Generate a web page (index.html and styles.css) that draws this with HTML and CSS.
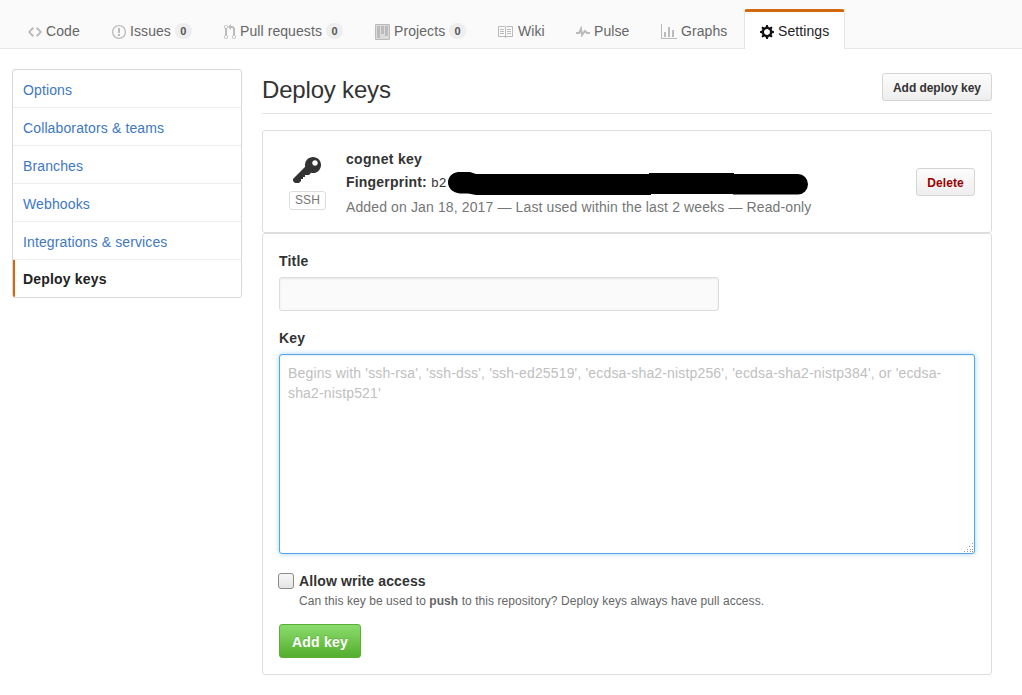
FILE: index.html
```html
<!DOCTYPE html>
<html lang="en">
<head>
<meta charset="utf-8">
<title>Deploy keys</title>
<link rel="stylesheet" href="styles.css">
</head>
<body>
<nav class="reponav">
  <a class="tab tab-code"><svg class="icon" width="14" height="16" viewBox="0 0 14 16"><path d="M9.5 3L8 4.5 11.5 8 8 11.5 9.5 13 14 8 9.5 3zm-5 0L0 8l4.5 5L6 11.5 2.5 8 6 4.5 4.5 3z"/></svg><span>Code</span></a>
  <a class="tab tab-issues"><svg class="icon" width="14" height="16" viewBox="0 0 14 16"><path fill-rule="evenodd" d="M7 2.3c3.14 0 5.7 2.56 5.7 5.7s-2.56 5.7-5.7 5.7A5.71 5.71 0 0 1 1.3 8c0-3.14 2.56-5.7 5.7-5.7zM7 1C3.14 1 0 4.14 0 8s3.14 7 7 7 7-3.14 7-7-3.14-7-7-7zm1 3H6v5h2V4zm0 6H6v2h2v-2z"/></svg><span>Issues</span><span class="counter">0</span></a>
  <a class="tab tab-pulls"><svg class="icon" width="12" height="16" viewBox="0 0 12 16"><path fill-rule="evenodd" d="M11 11.28V5c-.03-.78-.34-1.47-.94-2.06C9.46 2.35 8.78 2.03 8 2H7V0L4 3l3 3V4h1c.27.02.48.11.69.31.21.2.3.42.31.69v6.28A1.993 1.993 0 0 0 10 15a1.993 1.993 0 0 0 1-3.72zm-1 2.92c-.66 0-1.2-.55-1.2-1.2 0-.65.55-1.2 1.2-1.2.65 0 1.2.55 1.2 1.2 0 .65-.55 1.2-1.2 1.2zM4 3c0-1.11-.89-2-2-2a1.993 1.993 0 0 0-1 3.72v6.56A1.993 1.993 0 0 0 2 15a1.993 1.993 0 0 0 1-3.72V4.72c.59-.34 1-.98 1-1.72zm-.8 10c0 .66-.55 1.2-1.2 1.2-.65 0-1.2-.55-1.2-1.2 0-.65.55-1.2 1.2-1.2.65 0 1.2.55 1.2 1.2zM2 4.2C1.34 4.2.8 3.65.8 3c0-.65.55-1.2 1.2-1.2.65 0 1.2.55 1.2 1.2 0 .65-.55 1.2-1.2 1.2z"/></svg><span>Pull requests</span><span class="counter">0</span></a>
  <a class="tab tab-projects"><svg class="icon" width="15" height="16" viewBox="0 0 15 16"><path fill-opacity=".5" d="M1 1h13v14H1z"/><path fill-rule="evenodd" d="M10 12h3V2h-3v10zM6 10h3V2H6v8zM2 14h3V2H2v12zM14 0H1a1 1 0 0 0-1 1v14a1 1 0 0 0 1 1h13a1 1 0 0 0 1-1V1a1 1 0 0 0-1-1zm0 15H1V1h13z"/></svg><span>Projects</span><span class="counter">0</span></a>
  <a class="tab tab-wiki"><svg class="icon" width="16" height="16" viewBox="0 0 16 16"><path fill-rule="evenodd" d="M3 5h4v1H3V5zm0 3h4V7H3v1zm0 2h4V9H3v1zm11-5h-4v1h4V5zm0 2h-4v1h4V7zm0 2h-4v1h4V9zm2-6v9c0 .55-.45 1-1 1H9.5l-1 1-1-1H2c-.55 0-1-.45-1-1V3c0-.55.45-1 1-1h5.5l1 1 1-1H15c.55 0 1 .45 1 1zm-8 .5L7.5 3H2v9h6V3.5zm7-.5H9.5l-.5.5V12h6V3z"/></svg><span>Wiki</span></a>
  <a class="tab tab-pulse"><svg class="icon" width="14" height="16" viewBox="0 0 14 16"><path d="M11.5 8L8.8 5.4 6.6 8.5 5.5 1.6 2.38 8H0v2h3.6l.9-1.8.9 5.4L9 8.5l1.6 1.5H14V8h-2.5z"/></svg><span>Pulse</span></a>
  <a class="tab tab-graphs"><svg class="icon" width="16" height="16" viewBox="0 0 16 16"><path d="M16 14v1H0V0h1v14h15zM5 13H3V8h2v5zm4 0H7V3h2v10zm4 0h-2V6h2v7z"/></svg><span>Graphs</span></a>
  <a class="tab tab-settings selected"><svg class="icon" width="14" height="16" viewBox="0 0 14 16"><path fill-rule="evenodd" d="M14 8.77v-1.6l-1.94-.64-.45-1.09.88-1.84-1.13-1.13-1.81.91-1.09-.45-.69-1.92h-1.6l-.63 1.94-1.11.45-1.84-.88-1.13 1.13.91 1.81-.45 1.09L0 7.23v1.59l1.94.64.45 1.09-.88 1.84 1.13 1.13 1.81-.91 1.09.45.69 1.92h1.59l.63-1.94 1.11-.45 1.84.88 1.13-1.13-.92-1.81.47-1.09L14 8.75v.02zM7 11c-1.66 0-3-1.34-3-3s1.34-3 3-3 3 1.34 3 3-1.34 3-3 3z"/></svg><span>Settings</span></a>
</nav>
<div class="container">
  <aside class="menu">
    <a class="menu-item">Options</a>
    <a class="menu-item">Collaborators &amp; teams</a>
    <a class="menu-item">Branches</a>
    <a class="menu-item">Webhooks</a>
    <a class="menu-item">Integrations &amp; services</a>
    <a class="menu-item current">Deploy keys</a>
  </aside>
  <main class="content">
    <header class="subhead">
      <h1>Deploy keys</h1>
      <button class="btn btn-add">Add deploy key</button>
    </header>
    <section class="box key-row">
      <div class="key-type">
        <svg class="key-icon" width="28" height="32" viewBox="0 0 14 16"><path fill-rule="evenodd" d="M12.83 2.17C12.08 1.42 11.14 1.03 10 1c-1.13.03-2.08.42-2.83 1.17S6.04 3.86 6.01 5c0 .3.03.59.09.89L0 12v1l1 1h2l1-1v-1h1v-1h1v-1h2l1.09-1.11c.3.08.59.11.91.11 1.14-.03 2.08-.42 2.83-1.17S13.97 6.14 14 5c-.03-1.14-.42-2.08-1.17-2.83zM11 5.38c-.77 0-1.38-.61-1.38-1.38 0-.77.61-1.38 1.38-1.38.77 0 1.38.61 1.38 1.38 0 .77-.61 1.38-1.38 1.38z"/></svg>
        <span class="badge">SSH</span>
      </div>
      <div class="key-info">
        <strong class="key-name">cognet key</strong>
        <div class="fingerprint"><strong>Fingerprint:</strong><code>b2</code><svg class="redaction" width="360" height="24" viewBox="0 0 360 24"><path d="M10 0H22L28 2H201V1H286V2H350A10 10.200 0 0 1 350 22.400H285V22H203V23H28L20 21.500H12C5 21 0 16 0 10.500C0 5 4 1 10 0Z"/></svg></div>
        <div class="key-meta">Added on Jan 18, 2017 — Last used within the last 2 weeks — Read-only</div>
      </div>
      <button class="btn btn-danger">Delete</button>
    </section>
    <form class="box key-form">
      <label class="field-label" for="title">Title</label>
      <input class="title-input" id="title" type="text">
      <label class="field-label label-key" for="key">Key</label>
      <div class="textarea-wrap">
        <textarea class="key-input" id="key" placeholder="Begins with 'ssh-rsa', 'ssh-dss', 'ssh-ed25519', 'ecdsa-sha2-nistp256', 'ecdsa-sha2-nistp384', or 'ecdsa-sha2-nistp521'"></textarea>
        <svg class="grip" width="10" height="10" viewBox="0 0 10 10"><path d="M8 0h1v1h-1zM5 3h1v1h-1zM8 3h1v1h-1zM3 6h1v1h-1zM6 6h1v1h-1zM8 6h1v1h-1zM0 8h1v1h-1zM3 8h1v1h-1zM6 8h1v1h-1zM8 8h1v1h-1z"/></svg>
      </div>
      <div class="write-access">
        <input class="check" type="checkbox" id="write">
        <div>
          <label class="write-label" for="write">Allow write access</label>
          <p class="note">Can this key be used to <strong>push</strong> to this repository? Deploy keys always have pull access.</p>
        </div>
      </div>
      <button class="btn btn-primary" type="button">Add key</button>
    </form>
  </main>
</div>
</body>
</html>
```
FILE: styles.css
```css
* { box-sizing: border-box; }
body {
  margin: 0;
  background: #fff;
  color: #333;
  font: 14px/20px "Liberation Sans", Arial, sans-serif;
  letter-spacing: .125px;
}
button, input, textarea { font-family: inherit; margin: 0; }
.reponav {
  display: flex;
  align-items: flex-end;
  height: 49px;
  padding-left: 12px;
  background: #fafafa;
  border-bottom: 1px solid #e8e8e8;
  letter-spacing: .08px;
}
.tab {
  display: flex;
  align-items: center;
  gap: 4px;
  height: 40px;
  margin-bottom: -1px;
  padding: 0 0 0 15px;
  border: 1px solid transparent;
  border-top: 3px solid transparent;
  border-bottom: 0;
  border-radius: 3px 3px 0 0;
  color: #666;
  white-space: nowrap;
}
.tab-code { width: 84px; }
.tab-issues { width: 112px; }
.tab-pulls { width: 151px; }
.tab-projects { width: 123px; }
.tab-wiki { width: 78px; padding-left: 14px; gap: 5px; }
.tab-pulse { width: 85px; }
.tab-graphs { width: 99px; }
.tab-settings { width: 101px; }
.icon { flex: none; margin-top: 2px; fill: #bbb; }
.selected { background: #fff; color: #222; border-color: #d26911 #e5e5e5 transparent; }
.selected .icon { fill: #111; }
.counter {
  width: 17px;
  height: 16px;
  border-radius: 20px;
  background: #eee;
  color: #555;
  font-size: 11px;
  font-weight: bold;
  line-height: 17px;
  text-align: center;
}
.container { display: flex; align-items: flex-start; gap: 20px; padding: 20px 30px 0 12px; }
.menu { width: 230px; border: 1px solid #d8d8d8; border-radius: 3px; }
.menu-item {
  display: block;
  height: 38px;
  padding: 10px 10px 0;
  border-bottom: 1px solid #eee;
  color: #4078c0;
}
.current {
  height: 37px;
  padding: 9px 8px 0;
  border-bottom: 0;
  border-left: 2px solid #d26911;
  border-radius: 0 0 0 2px;
  color: #222;
  font-weight: bold;
  letter-spacing: .18px;
}
.content { flex: 1; }
.subhead {
  display: flex;
  justify-content: space-between;
  height: 45px;
  padding-top: 4px;
  margin-bottom: 16px;
  border-bottom: 1px solid #e5e5e5;
}
h1 { margin: 0; font-size: 24px; font-weight: normal; line-height: 33px; letter-spacing: -.18px; }
.btn {
  height: 28px;
  padding: 2px 0 0;
  border: 1px solid #d5d5d5;
  border-radius: 3px;
  background: linear-gradient(#fcfcfc, #eee);
  color: #333;
  font-size: 12px;
  font-weight: bold;
  line-height: 24px;
  letter-spacing: -.05px;
  white-space: nowrap;
}
.btn-add { width: 110px; }
.btn-danger { width: 59px; color: #900; letter-spacing: .05px; }
.box { border: 1px solid #ddd; border-radius: 3px; }
.key-row { display: flex; align-items: center; height: 103px; padding: 0 16px; }
.key-type {
  display: flex;
  flex-direction: column;
  align-items: center;
  width: 57px;
  padding-top: 1px;
}
.key-icon { display: block; margin-right: 1px; fill: #333; }
.badge {
  width: 37px;
  height: 19px;
  margin-top: 4px;
  border: 1px solid #ddd;
  border-radius: 3px;
  color: #767676;
  font-size: 12px;
  line-height: 17px;
  text-align: center;
}
.key-info { flex: 1; margin-left: 10px; padding-top: 3px; }
.key-name { display: block; letter-spacing: .3px; }
.fingerprint { display: flex; align-items: center; height: 27px; line-height: 27px; letter-spacing: .2px; }
.fingerprint code { margin-left: 4px; padding-top: 2px; font: 13px/27px "Liberation Mono", monospace; letter-spacing: 0; }
.redaction { flex: none; margin: 4px 0 0 1px; fill: #000; }
.key-meta { line-height: 22px; color: #767676; white-space: nowrap; }
.key-form { height: 442px; padding: 17px 16px 0; }
.field-label { display: block; font-weight: bold; letter-spacing: .2px; }
.title-input {
  display: block;
  width: 440px;
  height: 34px;
  margin: 6px 0 17px;
  border: 1px solid #ddd;
  border-radius: 3px;
  background: #fafafa;
  box-shadow: inset 0 1px 2px rgba(0,0,0,.075);
}
.textarea-wrap { position: relative; height: 200px; margin-top: 6px; }
.key-input {
  display: block;
  width: 696px;
  height: 200px;
  padding: 8px;
  border: 1px solid #51a7e8;
  border-radius: 3px;
  outline: 0;
  resize: none;
  box-shadow: inset 0 1px 2px rgba(0,0,0,.075), 0 0 5px rgba(81,167,232,.5);
  font-size: 14px;
  line-height: 20px;
  letter-spacing: .155px;
}
.key-input::placeholder { color: #c0c0c0; opacity: 1; }
.grip { position: absolute; right: 1px; bottom: 1px; fill: #999; }
.write-access { display: flex; margin: 17px 0 0 -1px; }
.check {
  appearance: none;
  width: 16px;
  height: 16px;
  margin: 2px 5px 0 0;
  border: 1px solid #8c8c87;
  border-radius: 3px;
  background: linear-gradient(#f8f8f8, #e4e4e4);
}
.write-label { display: block; font-weight: bold; }
.note { margin: 0; color: #666; font-size: 12px; line-height: 20px; letter-spacing: .065px; }
.btn-primary {
  display: block;
  width: 82px;
  height: 34px;
  margin-top: 13px;
  border-color: #5aad35;
  background: linear-gradient(#8add6d, #55ae2e);
  color: #fff;
  font-size: 14px;
  line-height: 30px;
  letter-spacing: .2px;
  text-shadow: 0 -1px 0 rgba(0,0,0,.15);
}
```
